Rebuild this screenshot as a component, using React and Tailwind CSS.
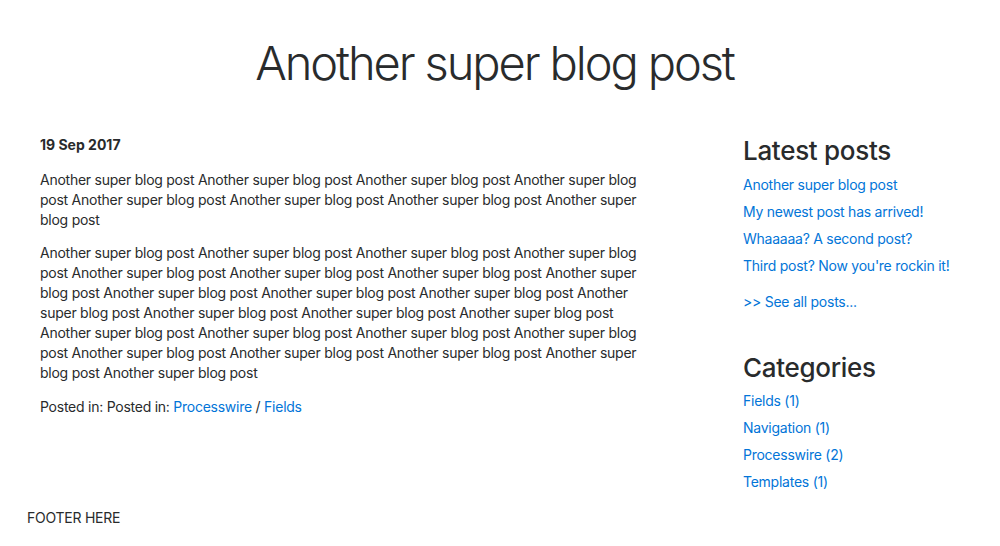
import React from "react";

const text = "Another super blog post";
const rep = (n) => Array(n).fill(text).join(" ");

export default function App() {
  return (
    <div
      className="w-[1000px] h-[546px] bg-white text-[#292b2c] text-[14px] leading-[20px] tracking-[-0.25px] relative overflow-hidden"
      style={{ fontFamily: "Inter, 'Liberation Sans', sans-serif" }}
    >
      <h1 className="text-center text-[47px] leading-[60px] font-light tracking-[-2.1px] pt-[33px] pr-[11px] text-[#292b2c]">
        Another super blog post
      </h1>
      <div className="flex mt-[42px]">
        <main className="w-[600px] ml-[40px]">
          <p className="font-bold tracking-[0px]">19 Sep 2017</p>
          <p className="mt-[15px]">{rep(8)}</p>
          <p className="mt-[13px]">{rep(24)}</p>
          <p className="mt-[14px]">
            Posted in: Posted in:{" "}
            <a className="text-[#0275d8]">Processwire</a> /{" "}
            <a className="text-[#0275d8]">Fields</a>
          </p>
        </main>
        <aside className="ml-[103px] w-[240px] mt-[1px]">
          <h3 className="text-[26px] leading-[30px] font-medium tracking-[-0.3px] text-[#292b2c]">Latest posts</h3>
          <ul className="mt-[9px] flex flex-col gap-[7px] text-[#0275d8]">
            <li>Another super blog post</li>
            <li>My newest post has arrived!</li>
            <li>Whaaaaa? A second post?</li>
            <li>Third post? Now you're rockin it!</li>
          </ul>
          <p className="mt-[16px] text-[#0275d8]">&gt;&gt; See all posts...</p>
          <h3 className="mt-[41px] text-[26px] leading-[30px] font-medium tracking-[-0.3px] text-[#292b2c]">Categories</h3>
          <ul className="mt-[8px] flex flex-col gap-[7px] text-[#0275d8]">
            <li>Fields (1)</li>
            <li>Navigation (1)</li>
            <li>Processwire (2)</li>
            <li>Templates (1)</li>
          </ul>
        </aside>
      </div>
      <footer className="absolute left-[27px] top-[508px] text-[14px] leading-[20px]">FOOTER HERE</footer>
    </div>
  );
}
